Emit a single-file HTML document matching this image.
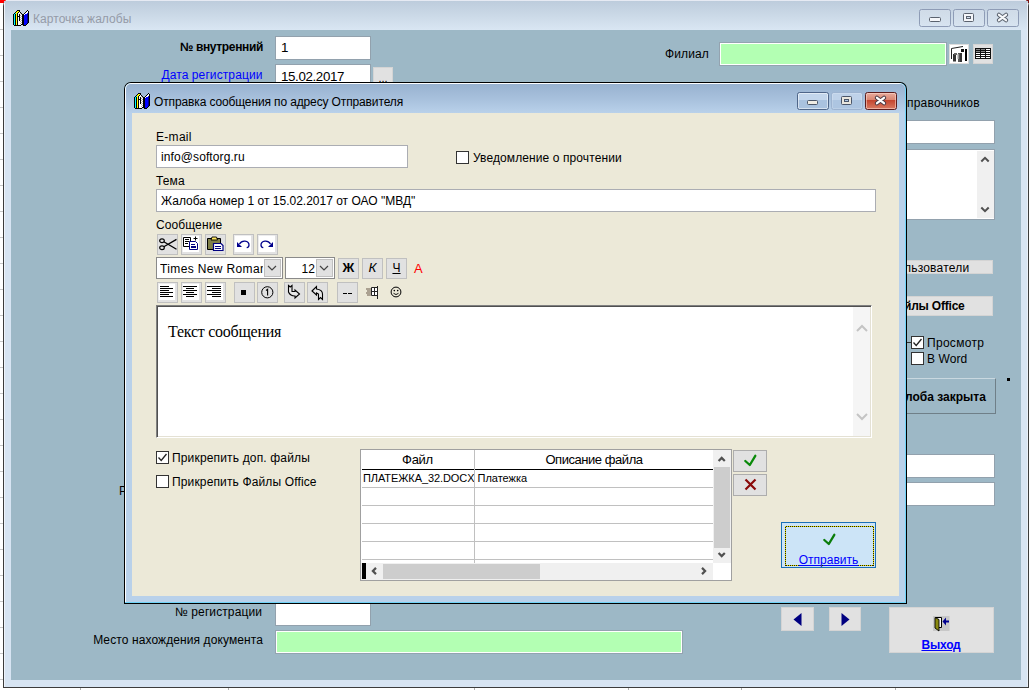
<!DOCTYPE html>
<html lang="ru">
<head>
<meta charset="utf-8">
<title>Карточка жалобы</title>
<style>
*{box-sizing:border-box;margin:0;padding:0}
html,body{width:1029px;height:690px;overflow:hidden;background:#fff}
body{position:relative;font-family:"Liberation Sans",sans-serif;font-size:13px;color:#000}
.a{position:absolute}
.t{position:absolute;white-space:nowrap;line-height:16px;font-size:12px;letter-spacing:.1px}
.inp{position:absolute;background:#fff;box-shadow:0 0 0 1px rgba(125,112,120,.32)}
.grn{position:absolute;background:#b3ffb3;border:1px solid #fff;box-shadow:0 0 0 1px rgba(125,112,120,.28)}
.gb{position:absolute;background:#e1e1e1;border:1px solid #d4d4d4}
.tb{position:absolute;width:21px;height:21px;background:#e1e1e1;border:1px solid #c0c0c0}
.tbw{position:absolute;width:21px;height:21px;background:#fff;border:1px solid #c0c0c0;box-shadow:inset -2px -2px 0 #e2e2e2,inset 1px 1px 0 #ececec}
.cb{position:absolute;width:13px;height:13px;background:#fff;border:1px solid #333}
.cap{position:absolute;height:18px;border-radius:2.500px}
</style>
</head>
<body>

<!-- desktop / sheet behind -->
<div class="a" style="left:0;top:0;width:1029px;height:690px;background:#fff"></div>
<div class="a" style="left:0;top:0;width:4px;height:690px;background:repeating-linear-gradient(#fff 0,#fff 25px,#c8c8c8 25px,#c8c8c8 26px);background-position:0 4px"></div>
<div class="a" style="left:0;top:0;width:6px;height:3px;background:#f00"></div>
<div class="a" style="left:1024px;top:0;width:5px;height:3px;background:#7a1010"></div>
<div class="a" style="left:80px;top:688px;width:1px;height:2px;background:#b0b0b0"></div>
<div class="a" style="left:228px;top:688px;width:1px;height:2px;background:#b0b0b0"></div>
<div class="a" style="left:474px;top:688px;width:1px;height:2px;background:#b0b0b0"></div>
<div class="a" style="left:628px;top:688px;width:1px;height:2px;background:#b0b0b0"></div>
<div class="a" style="left:741px;top:688px;width:1px;height:2px;background:#b0b0b0"></div>
<div class="a" style="left:895px;top:688px;width:1px;height:2px;background:#b0b0b0"></div>

<!-- MAIN WINDOW -->
<div id="mw" class="a" style="left:3px;top:-1px;width:1026px;height:689px;background:#d7e4f2;border:1px solid #3c3c3c;border-top-color:#e8eef6;border-radius:7px 7px 0 0"></div>
<div class="a" style="left:4px;top:0;width:1024px;height:30px;background:#e6eaf3;border-radius:6px 6px 0 0"></div>
<div class="a" style="left:4px;top:1px;width:1024px;height:29px;background:linear-gradient(#bdccdc,#cbd9e7 50%,#d9e6f3)"></div>
<div class="a" style="left:4px;top:3px;width:1px;height:684px;background:#eef3fa"></div>
<div class="a" style="left:1027px;top:3px;width:1px;height:684px;background:#eaf0f8"></div>
<div id="mc" class="a" style="left:11px;top:30px;width:1010px;height:650px;background:#9db8c6"></div>

<!-- main title -->
<svg class="a" style="left:13px;top:10px" width="16" height="16" viewBox="0 0 16 16" shape-rendering="crispEdges"><path fill="#000" d="M4 0h3v1h-3zM14 0h1v1h-1zM3 1h1v1h-1zM6 1h1v1h-1zM13 1h1v1h-1zM15 1h1v1h-1zM2 2h1v1h-1zM5 2h1v1h-1zM7 2h1v1h-1zM12 2h1v1h-1zM15 2h1v1h-1zM1 3h1v1h-1zM4 3h1v1h-1zM8 3h1v1h-1zM11 3h1v1h-1zM15 3h1v1h-1zM0 4h1v1h-1zM2 4h1v1h-1zM4 4h1v1h-1zM6 4h1v1h-1zM9 4h2v1h-2zM15 4h1v1h-1zM0 5h1v1h-1zM2 5h1v1h-1zM4 5h1v1h-1zM6 5h1v1h-1zM9 5h2v1h-2zM15 5h1v1h-1zM0 6h1v1h-1zM2 6h1v1h-1zM4 6h3v1h-3zM9 6h2v1h-2zM15 6h1v1h-1zM0 7h1v1h-1zM2 7h1v1h-1zM4 7h1v1h-1zM6 7h1v1h-1zM9 7h2v1h-2zM15 7h1v1h-1zM0 8h1v1h-1zM2 8h1v1h-1zM4 8h1v1h-1zM6 8h1v1h-1zM9 8h2v1h-2zM15 8h1v1h-1zM0 9h1v1h-1zM2 9h1v1h-1zM4 9h1v1h-1zM6 9h1v1h-1zM9 9h2v1h-2zM15 9h1v1h-1zM0 10h1v1h-1zM2 10h1v1h-1zM4 10h1v1h-1zM6 10h1v1h-1zM9 10h2v1h-2zM15 10h1v1h-1zM0 11h1v1h-1zM2 11h1v1h-1zM4 11h1v1h-1zM9 11h2v1h-2zM15 11h1v1h-1zM0 12h1v1h-1zM2 12h1v1h-1zM4 12h1v1h-1zM9 12h2v1h-2zM15 12h1v1h-1zM0 13h1v1h-1zM2 13h1v1h-1zM4 13h1v1h-1zM9 13h2v1h-2zM14 13h1v1h-1zM0 14h1v1h-1zM2 14h1v1h-1zM4 14h1v1h-1zM8 14h3v1h-3zM13 14h1v1h-1zM1 15h7v1h-7zM10 15h3v1h-3z"/><path fill="#ff0" d="M4 1h2v1h-2zM3 2h2v1h-2zM3 3h1v1h-1zM3 4h1v1h-1zM3 5h1v1h-1zM3 6h1v1h-1zM3 7h1v1h-1zM3 8h1v1h-1zM3 9h1v1h-1zM3 10h1v1h-1zM3 11h1v1h-1zM3 12h1v1h-1zM3 13h1v1h-1zM3 14h1v1h-1z"/><path fill="#fff" d="M14 1h1v1h-1zM6 2h1v1h-1zM13 2h2v1h-2zM5 3h2v1h-2zM12 3h2v1h-2zM5 4h1v1h-1zM7 4h1v1h-1zM11 4h1v1h-1zM5 5h1v1h-1zM8 5h1v1h-1zM7 6h1v1h-1zM5 7h1v1h-1zM8 7h1v1h-1zM5 8h1v1h-1zM7 8h1v1h-1zM5 9h1v1h-1zM8 9h1v1h-1zM5 10h1v1h-1zM7 10h1v1h-1zM5 11h2v1h-2zM8 11h1v1h-1zM5 12h3v1h-3zM5 13h2v1h-2zM8 13h1v1h-1zM5 14h3v1h-3z"/><path fill="#0ff" d="M2 3h1v1h-1zM1 4h1v1h-1zM1 5h1v1h-1zM1 6h1v1h-1zM1 7h1v1h-1zM1 8h1v1h-1zM1 9h1v1h-1zM1 10h1v1h-1zM1 11h1v1h-1zM1 12h1v1h-1zM1 13h1v1h-1zM1 14h1v1h-1z"/><path fill="#b0b0b0" d="M7 3h1v1h-1zM8 4h1v1h-1zM7 5h1v1h-1zM8 6h1v1h-1zM7 7h1v1h-1zM8 8h1v1h-1zM7 9h1v1h-1zM8 10h1v1h-1zM7 11h1v1h-1zM8 12h1v1h-1zM7 13h1v1h-1z"/><path fill="#00f" d="M14 3h1v1h-1zM12 4h2v1h-2zM11 5h3v1h-3zM11 6h3v1h-3zM11 7h3v1h-3zM11 8h3v1h-3zM11 9h3v1h-3zM11 10h3v1h-3zM11 11h3v1h-3zM11 12h3v1h-3zM11 13h3v1h-3zM11 14h2v1h-2z"/><path fill="#000090" d="M14 4h1v1h-1zM14 5h1v1h-1zM14 6h1v1h-1zM14 7h1v1h-1zM14 8h1v1h-1zM14 9h1v1h-1zM14 10h1v1h-1zM14 11h1v1h-1zM14 12h1v1h-1z"/></svg>
<div class="t" style="left:33px;top:11px;font-size:12px;letter-spacing:.05px;color:#959ba8">Карточка жалобы</div>

<!-- main caption buttons -->
<div class="cap" style="left:919px;top:9px;width:32px;background:linear-gradient(rgba(255,255,255,.18),rgba(255,255,255,.05));border:1px solid #8e9cb6"></div>
<div class="cap" style="left:953px;top:9px;width:32px;background:linear-gradient(rgba(255,255,255,.18),rgba(255,255,255,.05));border:1px solid #8e9cb6"></div>
<div class="cap" style="left:987px;top:9px;width:32px;background:linear-gradient(rgba(255,255,255,.18),rgba(255,255,255,.05));border:1px solid #8e9cb6"></div>
<div class="a" style="left:929px;top:17px;width:12px;height:5px;background:#f4f6f9;border:1px solid #5a626e;border-radius:1.500px"></div>
<div class="a" style="left:963px;top:13px;width:11px;height:9px;background:#f4f6f9;border:1px solid #5a626e;border-radius:1.500px"></div>
<div class="a" style="left:966px;top:16px;width:5px;height:3px;background:#cfdcec;border:1px solid #5a626e"></div>
<svg class="a" style="left:996px;top:12px" width="13" height="11" viewBox="0 0 13 11"><path d="M3 2.800 L10 8.200 M10 2.800 L3 8.200" stroke="#5a626e" stroke-width="4.200" stroke-linecap="round"/><path d="M3 2.800 L10 8.200 M10 2.800 L3 8.200" stroke="#f6f8fa" stroke-width="2.300" stroke-linecap="round"/></svg>

<!-- main window fields -->
<div class="t" style="left:99px;top:39px;width:164px;text-align:right;font-weight:bold;letter-spacing:-.35px">№ внутренний</div>
<div class="inp" style="left:276px;top:37px;width:94px;height:22px"></div>
<div class="t" style="left:281px;top:40px;font-size:13.330px;letter-spacing:-.37px">1</div>
<div class="t" style="left:98.500px;top:67px;width:164px;text-align:right;letter-spacing:.1px;color:#0000ff">Дата регистрации</div>
<div class="inp" style="left:276px;top:65px;width:94px;height:22px"></div>
<div class="t" style="left:281px;top:69px;font-size:13.330px;letter-spacing:-.37px">15.02.2017</div>
<div class="gb" style="left:373px;top:67px;width:20px;height:22px"></div>
<div class="t" style="left:378.500px;top:70px;font-size:11px;letter-spacing:0">...</div>

<div class="t" style="left:665px;top:46px">Филиал</div>
<div class="grn" style="left:720px;top:43px;width:226px;height:22px"></div>
<div class="a" style="left:949px;top:44px;width:20px;height:20px;background:#fff;border:1px solid #ddd"></div>
<svg class="a" style="left:951px;top:45px" width="17" height="18" viewBox="0 0 17 18"><path d="M.5 14 V3.500 L12 1.500" fill="none" stroke="#222" stroke-width="1"/><rect x="14" y="4" width="2" height="12" fill="#000"/><rect x="10" y="4" width="3" height="3" fill="#111"/><rect x="2" y="9" width="3" height="7.500" fill="#333"/><rect x="3" y="8" width="3" height="2" fill="#666"/><rect x="7" y="8" width="4" height="9" fill="#555"/><rect x="6.500" y="9" width="1.500" height="5" fill="#999"/><rect x="9" y="8" width="2" height="9" fill="#333"/></svg>
<div class="gb" style="left:973px;top:44px;width:20px;height:20px"></div>
<svg class="a" style="left:975px;top:48px" width="16" height="11" viewBox="0 0 16 11" shape-rendering="crispEdges"><rect width="16" height="11" fill="#111"/><path d="M1 1h4v1h-4zM6 1h4v1h-4zM1 3h4v1h-4zM6 3h4v1h-4z" fill="#8a8a8a"/><path d="M11 1h4v1h-4zM11 3h4v1h-4zM1 5h4v1h-4zM6 5h4v1h-4zM11 5h4v1h-4zM1 7h4v1h-4zM6 7h4v1h-4zM11 7h4v1h-4zM1 9h4v1h-4zM6 9h4v1h-4zM11 9h4v1h-4z" fill="#fff"/></svg>

<div class="t" style="left:907px;top:95px;letter-spacing:.2px">правочников</div>
<div class="inp" style="left:900px;top:121px;width:94px;height:22px"></div>
<div class="inp" style="left:900px;top:150px;width:94px;height:69px"></div>
<div class="a" style="left:977px;top:151px;width:17px;height:67px;background:#f0f0f0"></div>
<svg class="a" style="left:980px;top:156px" width="10" height="7" viewBox="0 0 10 7"><path d="M1.300 5.500 L5 1.800 L8.700 5.500" fill="none" stroke="#505050" stroke-width="2"/></svg>
<svg class="a" style="left:980px;top:206px" width="10" height="7" viewBox="0 0 10 7"><path d="M1.300 1.500 L5 5.200 L8.700 1.500" fill="none" stroke="#505050" stroke-width="2"/></svg>

<div class="gb" style="left:880px;top:260px;width:113px;height:14px"></div>
<div class="t" style="left:904px;top:260px;letter-spacing:.2px">льзователи</div>
<div class="gb" style="left:880px;top:296px;width:113px;height:20px"></div>
<div class="t" style="left:904px;top:298px;letter-spacing:-.2px;font-weight:bold">йлы Office</div>

<div class="cb" style="left:911px;top:336px"></div>
<svg class="a" style="left:912px;top:337px" width="11" height="11" viewBox="0 0 11 11"><path d="M1.5 5.5 L4.2 8.5 L9.5 2" fill="none" stroke="#222" stroke-width="1.3"/></svg>
<div class="t" style="left:927px;top:335px;letter-spacing:.3px">Просмотр</div>
<div class="cb" style="left:911px;top:352px"></div>
<div class="t" style="left:927px;top:351px">В Word</div>

<div class="a" style="left:880px;top:378px;width:116px;height:36px;background:#9db8c6;border:1px solid;border-color:#c9d8e0 #6f7f88 #6f7f88 #c9d8e0"></div>
<div class="t" style="left:905px;top:389px;letter-spacing:0;font-weight:bold">лоба закрыта</div>
<div class="a" style="left:1007px;top:378px;width:3px;height:3px;background:#000"></div>
<div class="a" style="left:905px;top:342px;width:6px;height:1px;background:#333"></div>

<div class="inp" style="left:900px;top:455px;width:94px;height:22px"></div>
<div class="inp" style="left:900px;top:483px;width:94px;height:22px"></div>

<div class="t" style="left:119px;top:483px;font-size:12px">Р</div>

<div class="t" style="left:100px;top:604px;width:162px;text-align:right;font-size:12px">№ регистрации</div>
<div class="inp" style="left:276px;top:596px;width:94px;height:29px"></div>
<div class="t" style="left:50px;top:632px;width:213px;text-align:right;font-size:12px">Место нахождения документа</div>
<div class="grn" style="left:276px;top:631px;width:406px;height:22px"></div>

<div class="gb" style="left:781px;top:607px;width:33px;height:24px"></div>
<svg class="a" style="left:793px;top:613px" width="9" height="13" viewBox="0 0 9 13"><path d="M8.500 0 L.5 6.500 L8.500 13Z" fill="#000080"/></svg>
<div class="gb" style="left:829px;top:607px;width:32px;height:24px"></div>
<svg class="a" style="left:841px;top:613px" width="9" height="13" viewBox="0 0 9 13"><path d="M.5 0 L8.500 6.500 L.5 13Z" fill="#000080"/></svg>

<div class="gb" style="left:889px;top:607px;width:105px;height:46px"></div>
<svg class="a" style="left:933px;top:616px" width="17" height="16" viewBox="0 0 17 16"><rect x="0" y="0" width="16.500" height="15" fill="#c8c8c8"/><path d="M2.500 1.500 H8.500 V11.500 H2.500Z" fill="#fff" stroke="#000" stroke-width="1"/><path d="M2 1.500 L6 3.500 V15 L2 12Z" fill="#8a8a10" stroke="#000" stroke-width="0.900"/><path d="M16 4.500 H13 V1.500 L9.500 5.500 L13 9.500 V6.500 H16Z" fill="#000090"/></svg>
<div class="t" style="left:888px;top:637px;width:106px;text-align:center;font-size:12px;letter-spacing:-.2px;font-weight:bold;color:#0000ff;text-decoration:underline">Выход</div>

<!-- DIALOG frame -->
<div class="a" style="left:124px;top:82px;width:783px;height:522px;background:#000;border-radius:7px 7px 0 0"></div>
<div class="a" style="left:125px;top:83px;width:781px;height:520px;background:#6fd3f8;border-radius:6px 6px 0 0"></div>
<div class="a" style="left:125px;top:83px;width:780px;height:519px;background:#fdfeff;border-radius:6px 6px 0 0"></div>
<div class="a" style="left:126px;top:84px;width:779px;height:518px;background:#b9d1ea;border-radius:5px 5px 0 0"></div>
<div class="a" style="left:126px;top:84px;width:779px;height:29px;background:linear-gradient(#98b2d0,#a7c0dc 50%,#b9d1ea);border-radius:5px 5px 0 0"></div>
<div id="dc" class="a" style="left:132px;top:113px;width:767px;height:483px;background:#ece9d8"></div>

<svg class="a" style="left:134px;top:93px" width="16" height="16" viewBox="0 0 16 16" shape-rendering="crispEdges"><path fill="#000" d="M4 0h3v1h-3zM14 0h1v1h-1zM3 1h1v1h-1zM6 1h1v1h-1zM13 1h1v1h-1zM15 1h1v1h-1zM2 2h1v1h-1zM5 2h1v1h-1zM7 2h1v1h-1zM12 2h1v1h-1zM15 2h1v1h-1zM1 3h1v1h-1zM4 3h1v1h-1zM8 3h1v1h-1zM11 3h1v1h-1zM15 3h1v1h-1zM0 4h1v1h-1zM2 4h1v1h-1zM4 4h1v1h-1zM6 4h1v1h-1zM9 4h2v1h-2zM15 4h1v1h-1zM0 5h1v1h-1zM2 5h1v1h-1zM4 5h1v1h-1zM6 5h1v1h-1zM9 5h2v1h-2zM15 5h1v1h-1zM0 6h1v1h-1zM2 6h1v1h-1zM4 6h3v1h-3zM9 6h2v1h-2zM15 6h1v1h-1zM0 7h1v1h-1zM2 7h1v1h-1zM4 7h1v1h-1zM6 7h1v1h-1zM9 7h2v1h-2zM15 7h1v1h-1zM0 8h1v1h-1zM2 8h1v1h-1zM4 8h1v1h-1zM6 8h1v1h-1zM9 8h2v1h-2zM15 8h1v1h-1zM0 9h1v1h-1zM2 9h1v1h-1zM4 9h1v1h-1zM6 9h1v1h-1zM9 9h2v1h-2zM15 9h1v1h-1zM0 10h1v1h-1zM2 10h1v1h-1zM4 10h1v1h-1zM6 10h1v1h-1zM9 10h2v1h-2zM15 10h1v1h-1zM0 11h1v1h-1zM2 11h1v1h-1zM4 11h1v1h-1zM9 11h2v1h-2zM15 11h1v1h-1zM0 12h1v1h-1zM2 12h1v1h-1zM4 12h1v1h-1zM9 12h2v1h-2zM15 12h1v1h-1zM0 13h1v1h-1zM2 13h1v1h-1zM4 13h1v1h-1zM9 13h2v1h-2zM14 13h1v1h-1zM0 14h1v1h-1zM2 14h1v1h-1zM4 14h1v1h-1zM8 14h3v1h-3zM13 14h1v1h-1zM1 15h7v1h-7zM10 15h3v1h-3z"/><path fill="#ff0" d="M4 1h2v1h-2zM3 2h2v1h-2zM3 3h1v1h-1zM3 4h1v1h-1zM3 5h1v1h-1zM3 6h1v1h-1zM3 7h1v1h-1zM3 8h1v1h-1zM3 9h1v1h-1zM3 10h1v1h-1zM3 11h1v1h-1zM3 12h1v1h-1zM3 13h1v1h-1zM3 14h1v1h-1z"/><path fill="#fff" d="M14 1h1v1h-1zM6 2h1v1h-1zM13 2h2v1h-2zM5 3h2v1h-2zM12 3h2v1h-2zM5 4h1v1h-1zM7 4h1v1h-1zM11 4h1v1h-1zM5 5h1v1h-1zM8 5h1v1h-1zM7 6h1v1h-1zM5 7h1v1h-1zM8 7h1v1h-1zM5 8h1v1h-1zM7 8h1v1h-1zM5 9h1v1h-1zM8 9h1v1h-1zM5 10h1v1h-1zM7 10h1v1h-1zM5 11h2v1h-2zM8 11h1v1h-1zM5 12h3v1h-3zM5 13h2v1h-2zM8 13h1v1h-1zM5 14h3v1h-3z"/><path fill="#0ff" d="M2 3h1v1h-1zM1 4h1v1h-1zM1 5h1v1h-1zM1 6h1v1h-1zM1 7h1v1h-1zM1 8h1v1h-1zM1 9h1v1h-1zM1 10h1v1h-1zM1 11h1v1h-1zM1 12h1v1h-1zM1 13h1v1h-1zM1 14h1v1h-1z"/><path fill="#b0b0b0" d="M7 3h1v1h-1zM8 4h1v1h-1zM7 5h1v1h-1zM8 6h1v1h-1zM7 7h1v1h-1zM8 8h1v1h-1zM7 9h1v1h-1zM8 10h1v1h-1zM7 11h1v1h-1zM8 12h1v1h-1zM7 13h1v1h-1z"/><path fill="#00f" d="M14 3h1v1h-1zM12 4h2v1h-2zM11 5h3v1h-3zM11 6h3v1h-3zM11 7h3v1h-3zM11 8h3v1h-3zM11 9h3v1h-3zM11 10h3v1h-3zM11 11h3v1h-3zM11 12h3v1h-3zM11 13h3v1h-3zM11 14h2v1h-2z"/><path fill="#000090" d="M14 4h1v1h-1zM14 5h1v1h-1zM14 6h1v1h-1zM14 7h1v1h-1zM14 8h1v1h-1zM14 9h1v1h-1zM14 10h1v1h-1zM14 11h1v1h-1zM14 12h1v1h-1z"/></svg>
<div id="dtitle" class="t" style="left:154px;top:94px;font-size:12px;letter-spacing:-.13px;color:#000">Отправка сообщения по адресу Отправителя</div>

<!-- dialog caption buttons -->
<div class="cap" style="left:797px;top:92px;width:32px;background:linear-gradient(#c3d6ec 45%,#a9c2df 45%);border:1px solid #4f6689;box-shadow:inset 0 0 0 1px rgba(255,255,255,.5)"></div>
<div class="cap" style="left:831px;top:92px;width:32px;background:linear-gradient(#bfd2e9 45%,#adc5e1 45%);border:1px solid #9db3d0;box-shadow:inset 0 0 0 1px rgba(255,255,255,.18)"></div>
<div class="cap" style="left:865px;top:92px;width:32px;background:linear-gradient(#e8ab9d 0%,#d9836f 45%,#c4442d 45%,#d87a62 100%);border:1px solid #5c1c1c;box-shadow:inset 0 0 0 1px rgba(255,220,210,.55)"></div>
<div class="a" style="left:807px;top:100px;width:11px;height:5px;background:#efece4;border:1px solid #4a5568;border-radius:1.500px"></div>
<div class="a" style="left:841px;top:96px;width:11px;height:9px;background:#e9e6de;border:1px solid #4a5568;border-radius:1.500px"></div>
<div class="a" style="left:844px;top:99px;width:5px;height:3px;background:#aec6e2;border:1px solid #4a5568"></div>
<svg class="a" style="left:874px;top:95px" width="13" height="11" viewBox="0 0 13 11"><path d="M3 2.800 L10 8.200 M10 2.800 L3 8.200" stroke="#4a3a44" stroke-width="4.200" stroke-linecap="round"/><path d="M3 2.800 L10 8.200 M10 2.800 L3 8.200" stroke="#fff" stroke-width="2.300" stroke-linecap="round"/></svg>

<!-- email -->
<div class="t" style="left:156px;top:129px;letter-spacing:.3px">E-mail</div>
<div class="a" style="left:156px;top:145px;width:252px;height:23px;background:#fff;border:1px solid #abadb3"></div>
<div class="t" style="left:161px;top:149px;font-size:12px">info@softorg.ru</div>
<div class="cb" style="left:456px;top:151px"></div>
<div class="t" style="left:473px;top:150px">Уведомление о прочтении</div>

<div class="t" style="left:156px;top:173px">Тема</div>
<div class="a" style="left:156px;top:189px;width:720px;height:23px;background:#fff;border:1px solid #abadb3"></div>
<div class="t" style="left:161px;top:193px;letter-spacing:0">Жалоба номер 1 от 15.02.2017 от ОАО "МВД"</div>

<div class="t" style="left:156px;top:217px">Сообщение</div>

<!-- toolbar row 1 -->
<div class="tb" style="left:157px;top:234px"></div>
<div class="tbw" style="left:181px;top:234px"></div>
<div class="tb" style="left:205px;top:234px"></div>
<div class="tbw" style="left:233px;top:234px"></div>
<div class="tbw" style="left:257px;top:234px"></div>

<!-- toolbar row 2 -->
<div class="a" style="left:156px;top:257px;width:127px;height:22px;background:#fff;border:1px solid #8a8a8a"></div>
<div class="t" style="left:160px;top:261px;font-size:12px;letter-spacing:.36px;width:103px;overflow:hidden">Times New Roman</div>
<div class="a" style="left:264px;top:259px;width:17px;height:18px;background:#e1e1e1;border:1px solid #c0c0c0"></div>
<svg class="a" style="left:267px;top:265px" width="10" height="6" viewBox="0 0 10 6"><path d="M1 1 L5 5 L9 1" fill="none" stroke="#444" stroke-width="1.2"/></svg>
<div class="a" style="left:285px;top:257px;width:50px;height:22px;background:#fff;border:1px solid #8a8a8a"></div>
<div class="t" style="left:289px;top:261px;font-size:12px;width:26px;text-align:right">12</div>
<div class="a" style="left:316px;top:259px;width:17px;height:18px;background:#e1e1e1;border:1px solid #c0c0c0"></div>
<svg class="a" style="left:319px;top:265px" width="10" height="6" viewBox="0 0 10 6"><path d="M1 1 L5 5 L9 1" fill="none" stroke="#444" stroke-width="1.2"/></svg>
<div class="tb" style="left:338px;top:258px"></div>
<div class="t" style="left:338px;top:260px;width:21px;text-align:center;font-size:13px;font-weight:bold">Ж</div>
<div class="tb" style="left:362px;top:258px"></div>
<div class="t" style="left:362px;top:260px;width:21px;text-align:center;font-size:13.5px;font-style:italic">К</div>
<div class="tb" style="left:386px;top:258px"></div>
<div class="t" style="left:386px;top:260px;width:21px;text-align:center;font-size:12px;text-decoration:underline">Ч</div>
<div class="t" style="left:414px;top:261px;font-size:13px;color:#ff0000">А</div>

<!-- toolbar row 3 -->
<div class="tbw" style="left:157px;top:282px"></div>
<div class="tbw" style="left:181px;top:282px"></div>
<div class="tbw" style="left:205px;top:282px"></div>
<div class="tb" style="left:234px;top:282px"></div>
<div class="tb" style="left:257px;top:282px"></div>
<div class="tb" style="left:284px;top:282px"></div>
<div class="tb" style="left:307px;top:282px"></div>
<div class="tb" style="left:337px;top:282px"></div>

<!-- toolbar icons row1 -->
<svg class="a" style="left:159px;top:236px" width="18" height="17" viewBox="0 0 18 17"><ellipse cx="3" cy="4.800" rx="2.300" ry="1.900" fill="none" stroke="#000" stroke-width="1.200"/><ellipse cx="3" cy="11.800" rx="2.300" ry="1.900" fill="none" stroke="#000" stroke-width="1.200"/><path d="M4.800 5.800 L17.500 13.200 M4.800 10.800 L17.500 3.400" stroke="#000" stroke-width="1.300" fill="none"/></svg>
<svg class="a" style="left:183px;top:236px" width="17" height="17" viewBox="0 0 17 17"><path d="M.5 1.500 H7.500 V10.500 H.5Z" fill="#fff" stroke="#000"/><path d="M2 3.500 H6 M2 5.500 H6 M2 7.500 H5" stroke="#000"/><path d="M6.500 5.500 H12.500 L14.500 7.500 V13.500 H6.500Z" fill="#fff" stroke="#000080"/><path d="M8 8.500 H12 M8 10.500 H13 M8 11.500 H13" stroke="#000080"/><path d="M12.500 .5 V4.500 M10.500 2.500 H14.500" stroke="#000" stroke-width="1"/></svg>
<svg class="a" style="left:207px;top:236px" width="17" height="17" viewBox="0 0 17 17"><path d="M.5 2.500 H13.500 V13.500 H.5Z" fill="#808048" stroke="#000"/><path d="M4 4 L5 1 H9.500 L10.500 4Z" fill="#ffe860" stroke="#000" stroke-width="0.900"/><path d="M6.500 7.500 H14 L16 9.500 V14.500 H6.500Z" fill="#fff" stroke="#000080" stroke-width="1.200"/><path d="M8 10.500 H14 M8 12.500 H14" stroke="#000080"/></svg>
<svg class="a" style="left:236px;top:237px" width="16" height="15" viewBox="0 0 16 15"><path d="M3.500 7 C5 4.500,7 4,9 4.200 C11.500 4.500,13 6,13 8 C13 9.500,12 10.500,10.700 10.700" fill="none" stroke="#00008b" stroke-width="1.300"/><path d="M1 5 L1 10 L6 10Z" fill="#00008b"/></svg>
<svg class="a" style="left:260px;top:237px" width="16" height="15" viewBox="0 0 16 15"><path d="M10.500 7 C9 4.500,7 4,5 4.200 C2.500 4.500,1 6,1 8 C1 9.500,2 10.500,3.300 10.700" fill="none" stroke="#00008b" stroke-width="1.300"/><path d="M13 5 L13 10 L8 10Z" fill="#00008b"/></svg>
<!-- toolbar icons row3 -->
<svg class="a" style="left:160px;top:286px" width="14" height="12" viewBox="0 0 14 12"><path d="M0 .5 H9 M0 2.500 H13 M0 4.500 H9 M0 6.500 H13 M0 8.500 H9 M0 10.500 H13" stroke="#000"/></svg>
<svg class="a" style="left:183px;top:286px" width="15" height="12" viewBox="0 0 15 12"><path d="M0 .5 H14 M3 2.500 H11 M0 4.500 H14 M3 6.500 H11 M0 8.500 H14 M3 10.500 H11" stroke="#000"/></svg>
<svg class="a" style="left:207px;top:286px" width="15" height="12" viewBox="0 0 15 12"><path d="M0 .5 H14 M5 2.500 H14 M0 4.500 H14 M5 6.500 H14 M0 8.500 H14 M5 10.500 H14" stroke="#000"/></svg>
<div class="a" style="left:241px;top:290px;width:5px;height:5px;background:#000"></div>
<svg class="a" style="left:260px;top:285px" width="15" height="15" viewBox="0 0 15 15"><circle cx="7.300" cy="7.300" r="5.600" fill="none" stroke="#000" stroke-width="1"/><path d="M6 5.500 L7.600 4.300 V10.500" fill="none" stroke="#000" stroke-width="1.100"/></svg>
<svg class="a" style="left:286px;top:284px" width="17" height="17" viewBox="0 0 17 17"><path d="M2.500 1.500 L4.200 3 L6 1.500 L6 7.500 L9 7.500 L9 6 L13.500 10 L9 14 L9 12 C6.500 12,4 11.500,2.500 8Z" fill="#e8e8e8" stroke="#000" stroke-width="1.100" stroke-linejoin="miter"/></svg>
<svg class="a" style="left:309px;top:284px" width="17" height="17" viewBox="0 0 17 17"><path d="M3 7 L7.500 2.500 L7.500 5 C11 5.500,13.500 7,13.500 10 L13.500 15.500 L11.500 13.500 L9.500 15.500 L9.500 10 L7.500 9 L7.500 11Z" fill="#e8e8e8" stroke="#000" stroke-width="1.100" stroke-linejoin="miter"/></svg>
<div class="a" style="left:343px;top:293px;width:4px;height:1px;background:#000"></div>
<div class="a" style="left:348px;top:293px;width:4px;height:1px;background:#000"></div>
<svg class="a" style="left:365px;top:285px" width="15" height="15" viewBox="0 0 15 15"><path d="M6.500 2.500 H12.500 V10.500 H6.500Z M9.500 2.500 V10.500 M6.500 6.500 H12.500" fill="#fff" stroke="#222" stroke-width="1"/><path d="M12.500 1 V14" stroke="#222" stroke-width="1"/><path d="M1 4 H6 M2 6 H6 M1 8 H6 M2 10 H6" stroke="#6a5a4a" stroke-width="1.200"/></svg>
<svg class="a" style="left:390px;top:286px" width="13" height="13" viewBox="0 0 13 13"><circle cx="6" cy="6" r="4.900" fill="none" stroke="#000" stroke-width="1"/><circle cx="4.300" cy="4.600" r=".8" fill="#000"/><circle cx="7.700" cy="4.600" r=".8" fill="#000"/><path d="M3.500 7.300 Q6 9.800 8.500 7.300" fill="none" stroke="#000" stroke-width="0.9"/></svg>

<!-- message area -->
<div class="a" style="left:156px;top:305px;width:716px;height:133px;background:#fff;border:1px solid;border-color:#808080 #fff #fff #808080;box-shadow:inset 1px 1px 0 #505050,inset -1px -1px 0 #e4e1d4"></div>
<div class="a" style="left:853px;top:307px;width:17px;height:129px;background:#f5f5f5"></div>
<svg class="a" style="left:856px;top:324px" width="12" height="8" viewBox="0 0 12 8"><path d="M1 7 L6 2 L11 7" fill="none" stroke="#c4c4c4" stroke-width="2"/></svg>
<svg class="a" style="left:856px;top:413px" width="12" height="8" viewBox="0 0 12 8"><path d="M1 1 L6 6 L11 1" fill="none" stroke="#c4c4c4" stroke-width="2"/></svg>
<div class="t" style="left:168px;top:323px;font-family:'Liberation Serif',serif;font-size:16px;line-height:18px;letter-spacing:-.25px">Текст сообщения</div>

<!-- checkboxes -->
<div class="cb" style="left:156px;top:451px"></div>
<svg class="a" style="left:157px;top:452px" width="11" height="11" viewBox="0 0 11 11"><path d="M1.5 5.5 L4.2 8.5 L9.5 2" fill="none" stroke="#222" stroke-width="1.3"/></svg>
<div class="t" style="left:172px;top:450px;letter-spacing:.16px">Прикрепить доп. файлы</div>
<div class="cb" style="left:156px;top:475px"></div>
<div class="t" style="left:172px;top:474px;letter-spacing:.14px">Прикрепить Файлы Office</div>

<!-- grid -->
<div class="a" style="left:360px;top:449px;width:372px;height:132px;background:#fff;border:1px solid #a0a0a0"></div>
<div class="t" style="left:361px;top:452px;width:113px;text-align:center;font-size:13px;letter-spacing:-.3px">Файл</div>
<div class="t" style="left:475px;top:452px;width:238px;text-align:center;font-size:13px;letter-spacing:-.45px">Описание файла</div>
<div class="a" style="left:362px;top:469px;width:351px;height:1px;background:#000"></div>
<div class="a" style="left:362px;top:487px;width:351px;height:1px;background:#c0c0c0"></div>
<div class="a" style="left:362px;top:505px;width:351px;height:1px;background:#c0c0c0"></div>
<div class="a" style="left:362px;top:523px;width:351px;height:1px;background:#c0c0c0"></div>
<div class="a" style="left:362px;top:541px;width:351px;height:1px;background:#c0c0c0"></div>
<div class="a" style="left:362px;top:559px;width:351px;height:1px;background:#c0c0c0"></div>
<div class="a" style="left:474px;top:450px;width:1px;height:113px;background:#c0c0c0"></div>
<div class="t" style="left:363px;top:470px;font-size:11px;letter-spacing:-.08px;width:111px;overflow:hidden">ПЛАТЕЖКА_32.DOCX</div>
<div class="t" style="left:477.500px;top:470px;font-size:11px;letter-spacing:0">Платежка</div>
<!-- vscroll -->
<div class="a" style="left:713px;top:450px;width:18px;height:113px;background:#f0f0f0"></div>
<div class="a" style="left:714px;top:467px;width:16px;height:81px;background:#cdcdcd"></div>
<svg class="a" style="left:717px;top:455px" width="10" height="8" viewBox="0 0 10 8"><path d="M1.600 6 L4.700 2.900 L7.800 6" fill="none" stroke="#505050" stroke-width="2.200"/></svg>
<svg class="a" style="left:717px;top:551px" width="10" height="8" viewBox="0 0 10 8"><path d="M1.600 2 L4.700 5.100 L7.800 2" fill="none" stroke="#505050" stroke-width="2.200"/></svg>
<!-- hscroll -->
<div class="a" style="left:361px;top:563px;width:352px;height:17px;background:#f0f0f0"></div>
<div class="a" style="left:362px;top:563px;width:4px;height:16px;background:#000"></div>
<div class="a" style="left:383px;top:564px;width:157px;height:15px;background:#cdcdcd"></div>
<svg class="a" style="left:370px;top:566px" width="8" height="10" viewBox="0 0 8 10"><path d="M6 1.900 L2.900 5 L6 8.100" fill="none" stroke="#505050" stroke-width="2.200"/></svg>
<svg class="a" style="left:700px;top:566px" width="8" height="10" viewBox="0 0 8 10"><path d="M2 1.900 L5.100 5 L2 8.100" fill="none" stroke="#505050" stroke-width="2.200"/></svg>

<!-- side buttons -->
<div class="gb" style="left:733px;top:450px;width:34px;height:22px;border-color:#adadad"></div>
<svg class="a" style="left:743px;top:453px" width="15" height="15" viewBox="0 0 15 15"><path d="M2.300 8 L6.800 12 L12.300 2.800" fill="none" stroke="#0a8a0a" stroke-width="2.300" stroke-linecap="round" stroke-linejoin="round"/></svg>
<div class="gb" style="left:733px;top:474px;width:34px;height:22px;border-color:#adadad"></div>
<svg class="a" style="left:744px;top:478px" width="13" height="13" viewBox="0 0 13 13"><path d="M1.500 1.500 L11.500 11.500 M11.500 1.500 L1.500 11.500" fill="none" stroke="#8a0a0a" stroke-width="2.200"/></svg>

<!-- send -->
<div class="a" style="left:781px;top:522px;width:95px;height:46px;background:#cce4f7;border:1px solid #1a6fb5"></div>
<div class="a" style="left:785px;top:526px;width:89px;height:1px;background:repeating-linear-gradient(90deg,#e8e000 0,#e8e000 1px,#202000 1px,#202000 2px)"></div>
<div class="a" style="left:785px;top:565px;width:89px;height:1px;background:repeating-linear-gradient(90deg,#e8e000 0,#e8e000 1px,#202000 1px,#202000 2px)"></div>
<div class="a" style="left:785px;top:526px;width:1px;height:40px;background:repeating-linear-gradient(#e8e000 0,#e8e000 1px,#202000 1px,#202000 2px)"></div>
<div class="a" style="left:873px;top:526px;width:1px;height:40px;background:repeating-linear-gradient(#e8e000 0,#e8e000 1px,#202000 1px,#202000 2px)"></div>
<svg class="a" style="left:822px;top:532px" width="15" height="15" viewBox="0 0 15 15"><path d="M2.300 8 L6.800 12 L12.300 2.800" fill="none" stroke="#0a7d0a" stroke-width="2.300" stroke-linecap="round" stroke-linejoin="round"/></svg>
<div class="t" style="left:781px;top:552px;width:95px;text-align:center;font-size:12px;letter-spacing:0;color:#0000ff;text-decoration:underline">Отправить</div>


</body>
</html>
